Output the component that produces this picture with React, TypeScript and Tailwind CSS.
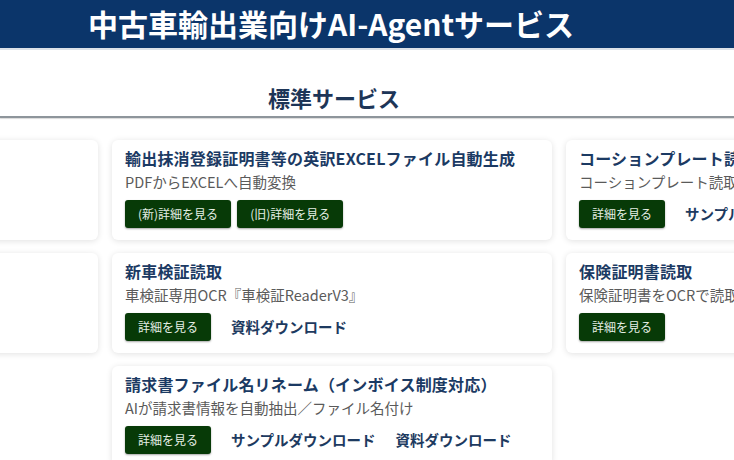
import React from "react";

type Action = { kind: "btn" | "link"; label: string };
type Card = { title: string; desc: string; actions: Action[] } | "blank" | null;

const font = { fontFamily: '"Noto Sans CJK JP", "Noto Sans", sans-serif' };

const rows: Card[][] = [
  [
    "blank",
    {
      title: "輸出抹消登録証明書等の英訳EXCELファイル自動生成",
      desc: "PDFからEXCELへ自動変換",
      actions: [
        { kind: "btn", label: "(新)詳細を見る" },
        { kind: "btn", label: "(旧)詳細を見る" },
      ],
    },
    {
      title: "コーションプレート読取",
      desc: "コーションプレート読取専用OCR",
      actions: [
        { kind: "btn", label: "詳細を見る" },
        { kind: "link", label: "サンプルダウンロード" },
      ],
    },
  ],
  [
    "blank",
    {
      title: "新車検証読取",
      desc: "車検証専用OCR『車検証ReaderV3』",
      actions: [
        { kind: "btn", label: "詳細を見る" },
        { kind: "link", label: "資料ダウンロード" },
      ],
    },
    {
      title: "保険証明書読取",
      desc: "保険証明書をOCRで読取・データ化",
      actions: [{ kind: "btn", label: "詳細を見る" }],
    },
  ],
  [
    null,
    {
      title: "請求書ファイル名リネーム（インボイス制度対応）",
      desc: "AIが請求書情報を自動抽出／ファイル名付け",
      actions: [
        { kind: "btn", label: "詳細を見る" },
        { kind: "link", label: "サンプルダウンロード" },
        { kind: "link", label: "資料ダウンロード" },
      ],
    },
    null,
  ],
];

function Actions({ actions }: { actions: Action[] }) {
  return (
    <div className="mt-2 flex items-center">
      {actions.map((a, i) => {
        const prev = actions[i - 1];
        const ml = i === 0 ? "" : prev && prev.kind === "btn" && a.kind === "btn" ? "ml-1.5" : "ml-5";
        if (a.kind === "btn") {
          return (
            <span
              key={i}
              className={`${ml} flex h-[28px] shrink-0 items-center rounded-[3px] bg-[#073a07] px-[13px] text-[12px] text-[#e4eee4] shadow-[0_1px_2px_rgba(0,0,0,0.35)]`}
            >
              {a.label}
            </span>
          );
        }
        return (
          <span key={i} className={`${ml} shrink-0 whitespace-nowrap text-[14.5px] font-bold text-[#1d3a60]`}>
            {a.label}
          </span>
        );
      })}
    </div>
  );
}

function CardView({ card }: { card: Card }) {
  if (!card) return <div />;
  if (card === "blank")
    return <div className="rounded-md bg-white shadow-[0_1px_6px_rgba(0,0,0,0.12)]" />;
  return (
    <div className="overflow-hidden rounded-md bg-white px-[13px] pt-[6px] pb-[12px] shadow-[0_1px_6px_rgba(0,0,0,0.12)]">
      <div className="whitespace-nowrap text-[16px] font-bold leading-6 tracking-[0.2px] text-[#1b3a63]">
        {card.title}
      </div>
      <div className="mt-[2px] whitespace-nowrap text-[14.5px] leading-5 text-[#5a5a5a]">{card.desc}</div>
      <Actions actions={card.actions} />
    </div>
  );
}

export default function App() {
  return (
    <div className="h-[460px] w-[734px] overflow-hidden bg-white" style={font}>
      <header className="flex h-[48px] items-center bg-[#0b356a] pl-[88px]">
        <h1 className="-mt-[3px] whitespace-nowrap text-[30px] font-bold leading-none text-white">
          中古車輸出業向けAI-Agentサービス
        </h1>
      </header>
      <div className="h-[2px] bg-[#dde2e8]" />
      <div className="pt-[32px]">
        <h2 className="pl-[268px] text-[22px] font-bold leading-[30px] text-[#1d3557]">標準サービス</h2>
        <div className="mt-[4px] h-[2px] bg-[#8e959b] shadow-[0_1px_1px_rgba(0,0,0,0.15)]" />
      </div>
      <div className="ml-[-342px] mt-[22px] grid w-[1348px] grid-cols-[440px_440px_440px] gap-x-[14px] gap-y-[13px]">
        {rows.flat().map((c, i) => (
          <CardView key={i} card={c} />
        ))}
      </div>
    </div>
  );
}
